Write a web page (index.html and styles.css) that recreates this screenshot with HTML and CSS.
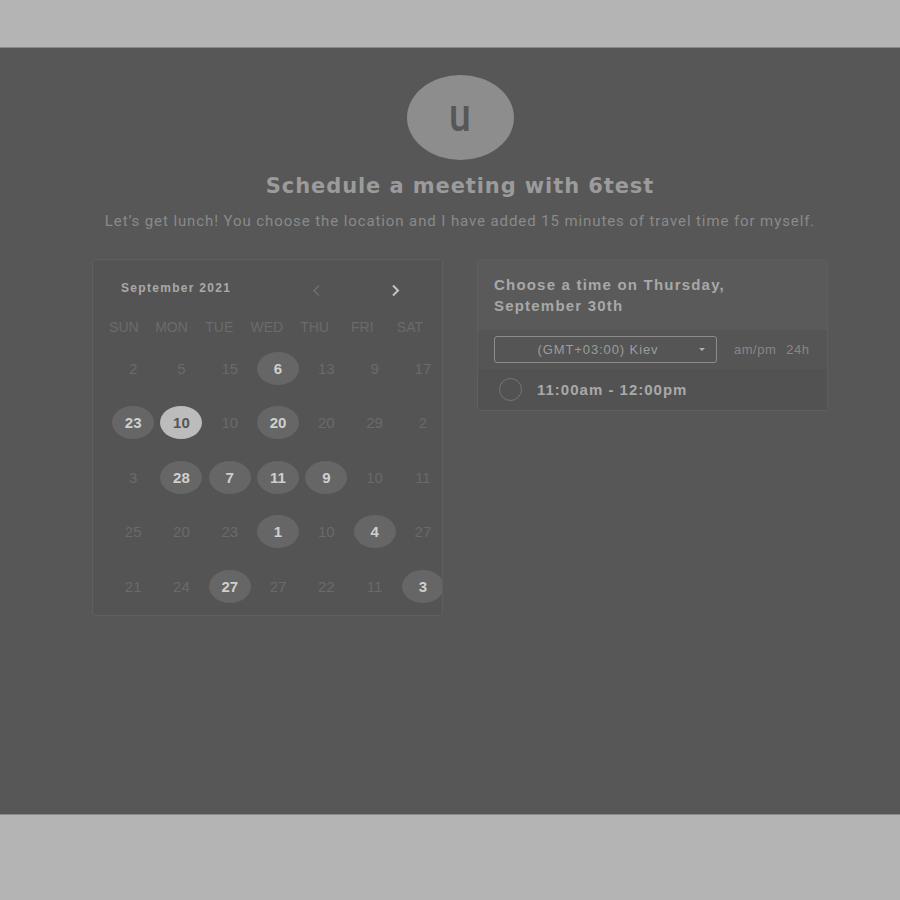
FILE: index.html
```html
<!DOCTYPE html>
<html>
<head>
<meta charset="utf-8">
<link rel="stylesheet" href="styles.css">
</head>
<body>
<div class="topbar"></div>
<main class="main">
  <div class="avatar"><span>u</span></div>
  <h1 class="title">Schedule a meeting with 6test</h1>
  <p class="subtitle">Let’s get lunch! You choose the location and I have added 15 minutes of travel time for myself.</p>
  <div class="cards">
    <section class="cal">
      <div class="cal-head">
        <span class="month">September 2021</span>
        <span class="nav prev"><svg width="9" height="13" viewBox="0 0 9 13"><path d="M7 1.5 L2 6.5 L7 11.5" fill="none" stroke="#6e6e6e" stroke-width="1.6"/></svg></span>
        <span class="nav next"><svg width="9" height="13" viewBox="0 0 9 13"><path d="M2 1.5 L7 6.5 L2 11.5" fill="none" stroke="#c4c4c4" stroke-width="2"/></svg></span>
      </div>
      <div class="weekdays">
        <span>SUN</span><span>MON</span><span>TUE</span><span>WED</span><span>THU</span><span>FRI</span><span>SAT</span>
      </div>
      <div class="days">
        <span class="d">2</span><span class="d">5</span><span class="d">15</span><span class="d on"><b>6</b></span><span class="d">13</span><span class="d">9</span><span class="d">17</span>
        <span class="d on"><b>23</b></span><span class="d sel"><b>10</b></span><span class="d">10</span><span class="d on"><b>20</b></span><span class="d">20</span><span class="d">29</span><span class="d">2</span>
        <span class="d">3</span><span class="d on"><b>28</b></span><span class="d on"><b>7</b></span><span class="d on"><b>11</b></span><span class="d on"><b>9</b></span><span class="d">10</span><span class="d">11</span>
        <span class="d">25</span><span class="d">20</span><span class="d">23</span><span class="d on"><b>1</b></span><span class="d">10</span><span class="d on"><b>4</b></span><span class="d">27</span>
        <span class="d">21</span><span class="d">24</span><span class="d on"><b>27</b></span><span class="d">27</span><span class="d">22</span><span class="d">11</span><span class="d on"><b>3</b></span>
      </div>
    </section>
    <section class="times">
      <div class="times-head">Choose a time on Thursday,<br>September 30th</div>
      <div class="tz-row">
        <div class="tz-select"><span class="tz-text">(GMT+03:00) Kiev</span><span class="caret"></span></div>
        <div class="fmt"><span>am/pm</span><span>24h</span></div>
      </div>
      <div class="slot">
        <span class="radio"></span>
        <span class="slot-text">11:00am - 12:00pm</span>
      </div>
    </section>
  </div>
</main>
<div class="bottombar"></div>
</body>
</html>
```
FILE: styles.css
```css
html, body {
  margin: 0;
  padding: 0;
  background: #b4b4b4;
  font-family: "Liberation Sans", Arial, sans-serif;
}
.topbar {
  height: 47px;
  background: #b4b4b4;
  border-bottom: 1px solid #8a8a8a;
}
.main {
  height: 766px;
  background: #575757;
  display: flex;
  flex-direction: column;
  align-items: center;
  box-sizing: border-box;
  padding: 27px 0 0 20px;
}
.bottombar {
  height: 86px;
  background: #b4b4b4;
  border-top: 1px solid #8a8a8a;
}
.avatar {
  width: 107px;
  height: 85px;
  border-radius: 50%;
  background: #8d8d8d;
  display: flex;
  align-items: center;
  justify-content: center;
}
.avatar span {
  font-family: Roboto, sans-serif;
  font-weight: 500;
  font-size: 46px;
  color: #575757;
  line-height: 1;
  margin-top: -6px;
  transform: scaleX(0.85);
}
.title {
  margin: 13px 0 0;
  font-family: "DejaVu Sans", sans-serif;
  font-weight: 700;
  font-size: 21px;
  line-height: 26px;
  letter-spacing: 0.9px;
  color: #9b9b9b;
}
.subtitle {
  margin: 12px 0 0;
  font-family: Roboto, sans-serif;
  font-size: 15px;
  line-height: 20px;
  letter-spacing: 0.9px;
  color: #8a8a8a;
}
.cards {
  margin-top: 28px;
  display: flex;
  gap: 34px;
  align-items: flex-start;
}
.cal {
  width: 351px;
  height: 357px;
  box-sizing: border-box;
  border: 1px solid #5f5f5f;
  border-radius: 3px;
  background: #545454;
  overflow: hidden;
}
.cal-head {
  display: flex;
  align-items: center;
  height: 20px;
  padding: 18px 0 0 28px;
}
.month {
  font-size: 12px;
  font-weight: 700;
  letter-spacing: 1.3px;
  color: #a9a9a9;
  width: 191px;
}
.nav {
  display: flex;
  align-items: center;
  margin-top: 5px;
}
.prev { width: 79px; }
.weekdays {
  display: grid;
  grid-template-columns: repeat(7, 47.7px);
  padding-left: 7px;
  margin-top: 19px;
  height: 20px;
  align-items: center;
  font-size: 14px;
  color: #6b6b6b;
}
.weekdays span { text-align: center; }
.days {
  display: grid;
  grid-template-columns: repeat(7, 48.3px);
  grid-auto-rows: 54.5px;
  padding-left: 16px;
  margin-top: 4px;
}
.d {
  display: flex;
  align-items: center;
  justify-content: center;
  font-size: 15px;
  color: #6a6a6a;
}
.d b {
  display: flex;
  align-items: center;
  justify-content: center;
  width: 42px;
  height: 33px;
  border-radius: 50%;
  background: #666666;
  color: #cfcfcf;
  font-size: 15px;
}
.d.sel b {
  background: #bcbcbc;
  color: #555555;
}
.times {
  width: 351px;
  box-sizing: border-box;
  border: 1px solid #5e5e5e;
  border-radius: 3px;
  background: #535353;
}
.times-head {
  background: #5a5a5a;
  padding: 14px 16px 0;
  height: 56px;
  font-size: 15px;
  font-weight: 700;
  line-height: 21px;
  letter-spacing: 1.2px;
  color: #a8a8a8;
}
.tz-row {
  display: flex;
  align-items: center;
  height: 39px;
  padding-left: 16px;
  background: #555555;
}
.tz-select {
  width: 223px;
  height: 27px;
  box-sizing: border-box;
  border: 1px solid #8c8c8c;
  border-radius: 3px;
  display: flex;
  align-items: center;
}
.tz-text {
  flex: 1;
  text-align: center;
  padding-left: 2px;
  font-size: 13px;
  letter-spacing: 0.9px;
  color: #9c9c9c;
}
.caret {
  width: 0;
  height: 0;
  border-left: 3px solid transparent;
  border-right: 3px solid transparent;
  border-top: 3px solid #b0b0b0;
  margin-right: 11px;
}
.fmt {
  margin-left: 17px;
  display: flex;
  gap: 10px;
  font-size: 13px;
  letter-spacing: 0.5px;
  color: #878787;
}
.slot {
  display: flex;
  align-items: center;
  height: 41px;
  padding-left: 21px;
  background: #525252;
}
.radio {
  width: 23px;
  height: 23px;
  box-sizing: border-box;
  border: 1.5px solid #767676;
  border-radius: 50%;
}
.slot-text {
  margin-left: 15px;
  font-size: 15px;
  font-weight: 700;
  letter-spacing: 1px;
  color: #a9a9a9;
}
```
